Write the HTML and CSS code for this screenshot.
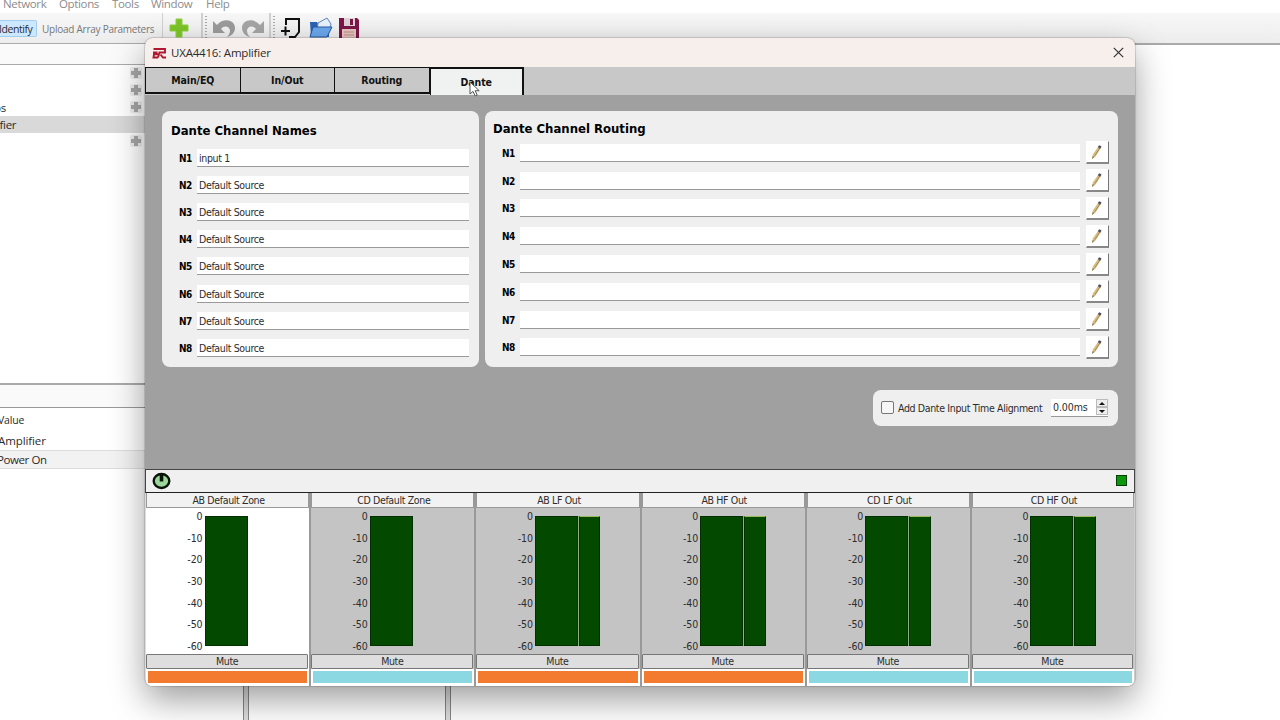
FILE: index.html
```html
<!DOCTYPE html>
<html lang="en">
<head>
    <meta charset="UTF-8">
    <meta name="viewport" content="width=device-width, initial-scale=1.0">
    <title>UXA4416: Amplifier</title>
    <link rel="stylesheet" href="styles.css">
</head>
<body>
    <div class="app">
        <nav class="menubar">
            <span class="m-network">Network</span>
            <span class="m-options">Options</span>
            <span class="m-tools">Tools</span>
            <span class="m-window">Window</span>
            <span>Help</span>
        </nav>
        <div class="toolbar">
            <button class="identify">Identify</button>
            <span class="upload">Upload Array Parameters</span>
            <i class="sep"></i>
            <svg class="ic-add" width="22" height="22" viewBox="0 0 22 22">
                <path d="M8 2h6v6h6v6h-6v6H8v-6H2V8h6z" fill="#7cc427" stroke="#8fd13c"/>
            </svg>
            <i class="sep wide"></i>
            <i class="grip"></i>
            <svg class="ic-undo" width="24" height="22" viewBox="0 0 24 22">
                <path d="M1 4v12h12l-4-4c3-4 9-3 9 2 0 2-1 4-3 6 5-1 8-5 8-9C23 3 12 0 5 8z" fill="#9b9b9b"/>
            </svg>
            <svg class="ic-redo" width="24" height="22" viewBox="0 0 24 22">
                <path d="M23 4v12H11l4-4c-3-4-9-3-9 2 0 2 1 4 3 6-5-1-8-5-8-9C1 3 12 0 19 8z" fill="#a5a5a5"/>
            </svg>
            <i class="sep wide"></i>
            <i class="grip"></i>
            <svg class="ic-new" width="20" height="22" viewBox="0 0 20 22">
                <path d="M5 8V2h13v13l-4 5H8M0 14h9M4.500 9.500v9" fill="none" stroke="#111" stroke-width="2"/>
            </svg>
            <svg class="ic-open" width="24" height="22" viewBox="0 0 24 22">
                <path d="M1 5h7l2 3h10v12H2z" fill="#2c62b4"/>
                <path d="M9 6l9-5 4 6-2 7H8z" fill="#e9f1fa" stroke="#5c87be"/>
                <path d="M4 10h19l-5 10H1z" fill="#6aa7ea" stroke="#2458a8"/>
            </svg>
            <svg class="ic-save" width="20" height="20" viewBox="0 0 20 20">
                <path d="M0 0h18l2 2v18H0z" fill="#7c1647"/>
                <path d="M5 0h11v8H5z" fill="#ded3d8"/>
                <path d="M11 1h3v6h-3z" fill="#7c1647"/>
                <path d="M3 11h14v9H3z" fill="#e6c4bd"/>
                <path d="M5 14h10M5 17h10" stroke="#bb8d8d"/>
            </svg>
        </div>
        <div class="workspace">
            <aside class="sidebar">
                <div class="side-head"></div>
                <ul class="tree">
                    <li><b class="plus"></b></li>
                    <li><b class="plus"></b></li>
                    <li>ps<b class="plus"></b></li>
                    <li class="selected">ifier</li>
                    <li><b class="plus"></b></li>
                </ul>
                <div class="props-head"></div>
                <div class="props">
                    <div class="prop-title">Value</div>
                    <div class="prop">Amplifier</div>
                    <div class="prop shaded">Power On</div>
                </div>
            </aside>
            <div class="splitter"></div>
            <div class="middle"></div>
            <div class="splitter"></div>
            <main class="canvas"></main>
        </div>
    </div>

    <div class="window">
        <header class="titlebar">
            <svg width="15" height="12" viewBox="0 0 15 12">
                <path d="M1.500 2h11.500v3.500H6.500M5.500 5.500H1M6 7.200H2L1.500 10.500H6M6 10.500L7.500 5.500M8.500 7.500l2.500 3h3" fill="none" stroke="#b01831" stroke-width="1.900"/>
            </svg>
            <span class="title">UXA4416: Amplifier</span>
            <svg class="close" width="11" height="11" viewBox="0 0 11 11">
                <path d="M.8.800l9.400 9.400M10.200.800L.8 10.200" stroke="#333" stroke-width="1.200"/>
            </svg>
        </header>
        <div class="tabs">
            <div class="tab">Main/EQ</div>
            <div class="tab">In/Out</div>
            <div class="tab">Routing</div>
            <div class="tab active">Dante</div>
        </div>
        <div class="content">
            <div class="panels">
                <section class="panel names">
                    <h2>Dante Channel Names</h2>
                    <div class="rows" id="names"></div>
                </section>
                <section class="panel routing">
                    <h2>Dante Channel Routing</h2>
                    <div class="rows" id="routing"></div>
                </section>
            </div>
            <div class="panel align">
                <i class="check"></i>
                <span class="align-label">Add Dante Input Time Alignment</span>
                <div class="spin">
                    <span>0.00ms</span>
                    <div class="arrows"><i class="up"></i><i class="down"></i></div>
                </div>
            </div>
        </div>
        <div class="status">
            <svg width="19" height="18" viewBox="0 0 19 18">
                <ellipse cx="9.500" cy="9" rx="7.800" ry="7" fill="#9bd79b" stroke="#0a140a" stroke-width="2.400"/>
                <path d="M9.500 3v6.500" stroke="#0a140a" stroke-width="3.600"/>
            </svg>
            <i class="led"></i>
        </div>
        <div class="strips" id="strips"></div>
    </div>

    <svg class="cursor" width="12" height="17" viewBox="0 0 12 17">
        <path d="M1 1v12l3-2.600L6.200 15l2-.9-2-4.400h4z" fill="#fff" stroke="#555"/>
    </svg>

    <script>
        const names = ['input 1', 'Default Source', 'Default Source', 'Default Source',
            'Default Source', 'Default Source', 'Default Source', 'Default Source'];

        const pencil = `<svg width="12" height="16" viewBox="0 0 12 16">
            <path d="M1 15l.8-4.500L7 3l2.500 1.500-5 8z" fill="#d8bb80"/>
            <path d="M4 11.500L8.800 4" stroke="#a58a4c"/>
            <path d="M6.800 3.300L8 1.200l2.500 1-1 2.600z" fill="#55505a"/>
            <path d="M1 15l.6-3 1.900 1z" fill="#8e8069"/>
        </svg>`;

        names.forEach((name, i) => {
            document.getElementById('names').innerHTML +=
                `<div class="row"><label>N${i + 1}</label><div class="field">${name}</div></div>`;
            document.getElementById('routing').innerHTML +=
                `<div class="row"><label>N${i + 1}</label><div class="field"></div><button class="edit">${pencil}</button></div>`;
        });

        const strips = [
            { name: 'AB Default Zone', color: 'orange', selected: true },
            { name: 'CD Default Zone', color: 'cyan' },
            { name: 'AB LF Out', color: 'orange', double: true },
            { name: 'AB HF Out', color: 'orange', double: true },
            { name: 'CD LF Out', color: 'cyan', double: true },
            { name: 'CD HF Out', color: 'cyan', double: true }
        ];
        const scale = [0, -10, -20, -30, -40, -50, -60];

        strips.forEach(strip => {
            document.getElementById('strips').innerHTML += `
                <div class="strip ${strip.selected ? 'selected' : ''}">
                    <div class="strip-name">${strip.name}</div>
                    <div class="meter">
                        <div class="scale">${scale.map(n => `<span>${n}</span>`).join('')}</div>
                        <div class="bar"></div>
                        ${strip.double ? '<div class="bar thin"></div>' : ''}
                    </div>
                    <button class="mute">Mute</button>
                    <div class="tag"><i class="${strip.color}"></i></div>
                </div>`;
        });
    </script>
</body>
</html>
```
FILE: styles.css
```css
* {
    box-sizing: border-box;
}

body {
    margin: 0;
    width: 1280px;
    height: 720px;
    overflow: hidden;
    position: relative;
    background: #fff;
    color: #2c2c2c;
    font-family: "DejaVu Sans Condensed", "DejaVu Sans", sans-serif;
    font-size: 10.5px;
    letter-spacing: -0.35px;
}

button {
    font: inherit;
    color: inherit;
    letter-spacing: inherit;
    padding: 0;
}

svg, i {
    display: block;
    flex: none;
}

/* main application */
.app {
    height: 720px;
    display: flex;
    flex-direction: column;
    font-family: "Open Sans", sans-serif;
}

.menubar {
    height: 13px;
    flex: none;
    display: flex;
    padding-left: 3px;
    line-height: 8px;
    font-size: 11.5px;
    color: #8c8c8c;
    white-space: nowrap;
}

.m-network { width: 56px; }
.m-options { width: 53px; }
.m-tools { width: 39px; }
.m-window { width: 55px; }

.toolbar {
    height: 30px;
    flex: none;
    display: flex;
    align-items: center;
    background: linear-gradient(#f7f7f7, #ededed);
    font-size: 10.5px;
    white-space: nowrap;
}

.identify {
    width: 37px;
    height: 17px;
    margin-top: 1px;
    border: 1px solid #a3cdec;
    border-left: 0;
    border-radius: 0 2px 2px 0;
    background: #cce8ff;
    text-align: left;
    text-indent: -1px;
    line-height: 14px;
    letter-spacing: -0.45px;
}

.upload {
    width: 120px;
    margin: 2px 0 0 5px;
    color: #777;
    font-size: 10px;
    letter-spacing: -0.25px;
}

.sep {
    width: 1px;
    height: 30px;
    background: #d0d0d0;
}

.sep.wide {
    width: 2px;
}

.grip {
    width: 2px;
    height: 24px;
    margin-left: 2px;
    background: repeating-linear-gradient(#aaa 0 1px, transparent 1px 3px);
}

.ic-add { margin: 0 11px 0 5px; }
.ic-undo { margin-left: 5px; }
.ic-redo { margin: 0 4px 0 5px; }
.ic-new { margin-left: 6px; }
.ic-open { margin-left: 8px; }
.ic-save { margin-left: 6px; }

.workspace {
    flex: 1;
    display: flex;
}

.sidebar {
    width: 243px;
    display: flex;
    flex-direction: column;
}

.side-head {
    height: 22px;
    border-top: 1px solid #aaa;
    border-bottom: 1px solid #aaa;
    background: #fafafa;
}

.tree {
    list-style: none;
    margin: 0;
    padding: 0;
    height: 318px;
    font-size: 11.5px;
}

.tree li {
    height: 17px;
    display: flex;
    align-items: center;
    position: relative;
    text-indent: -6px;
}

.tree li.selected {
    background: #d9d9d9;
    text-indent: -3px;
}

.plus {
    position: absolute;
    left: 130px;
    top: 2px;
    width: 12px;
    height: 12px;
    border-radius: 2px;
    background:
        linear-gradient(#a8a8a8, #a8a8a8) 50% 50% / 10px 4px no-repeat,
        linear-gradient(#a8a8a8, #a8a8a8) 50% 50% / 4px 10px no-repeat,
        #eee;
}

.props-head {
    height: 25px;
    border-top: 2px solid #aaa;
    border-bottom: 1px solid #999;
    background: #fafafa;
}

.prop-title {
    height: 24px;
    line-height: 25px;
    font-size: 10.5px;
    text-indent: -2px;
    letter-spacing: -0.2px;
}

.prop {
    height: 18px;
    line-height: 18px;
    font-size: 11.5px;
    text-indent: -2px;
    letter-spacing: -0.1px;
}

.prop.shaded {
    height: 19px;
    line-height: 17px;
    background: #f2f2f2;
    border-top: 1px solid #ddd;
    border-bottom: 1px solid #ddd;
    text-indent: -3px;
    letter-spacing: -0.4px;
}

.splitter {
    width: 6px;
    border-left: 1px solid #888;
    border-right: 1px solid #888;
    background: #ddd;
}

.middle {
    width: 196px;
}

.canvas {
    flex: 1;
    border-top: 2px solid #aaa;
}

/* amplifier window, floats over the application */
.window {
    position: absolute;
    left: 145px;
    top: 38px;
    width: 990px;
    height: 648px;
    display: flex;
    flex-direction: column;
    border-radius: 8px;
    overflow: hidden;
    background: #a0a0a0;
    box-shadow: 0 0 1px 1px rgba(0, 0, 0, 0.15), 0 14px 34px rgba(0, 0, 0, 0.38);
}

.titlebar {
    height: 29px;
    flex: none;
    display: flex;
    align-items: center;
    padding: 0 11px 0 7px;
    background: #f7efeb;
    font-family: "Open Sans", sans-serif;
}

.title {
    margin-left: 4px;
    padding-bottom: 1px;
    font-size: 11.5px;
    letter-spacing: -0.2px;
}

.close {
    margin-left: auto;
}

.tabs {
    height: 28px;
    flex: none;
    display: flex;
    background: #c8c8c8;
}

.tab {
    width: 94.500px;
    height: 27px;
    border: 1px solid #111;
    border-left-width: 0;
    border-bottom-width: 2px;
    text-align: center;
    line-height: 25px;
    font-size: 10.5px;
    font-weight: bold;
    letter-spacing: -0.1px;
    color: #111;
}

.tab:first-child {
    width: 95.500px;
    border-left-width: 1px;
}

.tab.active {
    height: 28px;
    border-width: 2px 2px 0 1px;
    background: #f0f2f2;
    line-height: 27px;
}

.content {
    height: 374px;
    flex: none;
    padding: 16px 17px 0;
}

.panels {
    display: flex;
    gap: 6px;
}

.panel {
    border-radius: 8px;
    background: #efefef;
}

.panel h2 {
    margin: 0;
    padding-left: 8px;
    font-size: 13px;
    line-height: 18px;
    letter-spacing: 0;
    color: #000;
}

.names {
    width: 317px;
    height: 256px;
    padding-top: 11px;
}

.names h2 {
    padding-left: 9px;
}

.routing {
    width: 633px;
    height: 256px;
    padding-top: 9px;
}

.row {
    display: flex;
    align-items: center;
}

.row label {
    width: 18px;
    margin-left: 1px;
    padding-top: 1px;
    flex: none;
    font-size: 10px;
    font-weight: bold;
    letter-spacing: -0.6px;
    color: #000;
}

.field {
    height: 18px;
    padding-left: 2px;
    border-bottom: 1px solid #999;
    background: #fff;
    line-height: 18px;
}

.names .rows {
    padding: 4px 0 0 16px;
}

.names .row {
    height: 27.200px;
}

.names .field {
    width: 272px;
}

.routing .rows {
    padding: 1px 0 0 16px;
}

.routing .row {
    height: 27.800px;
}

.routing .field {
    width: 560px;
}

.edit {
    width: 23px;
    height: 23px;
    margin-left: 6px;
    padding-right: 1px;
    display: flex;
    align-items: center;
    justify-content: center;
    border: 1px solid #fff;
    border-right-color: #777;
    border-bottom: 2px solid #888;
    background: #fff;
}

.align {
    width: 245px;
    height: 36px;
    margin: 23px 0 0 auto;
    padding: 0 10px 1px 8px;
    display: flex;
    align-items: center;
}

.check {
    width: 13px;
    height: 13px;
    border: 1px solid #777;
    border-radius: 2px;
    background: #f6f6f6;
}

.align-label {
    width: 149px;
    margin-left: 4px;
    white-space: nowrap;
}

.spin {
    width: 57px;
    height: 18px;
    margin-left: auto;
    padding-left: 2px;
    display: flex;
    align-items: center;
    justify-content: space-between;
    border-bottom: 1px solid #999;
    background: #fff;
    letter-spacing: -0.1px;
}

.arrows {
    width: 12px;
    display: flex;
    flex-direction: column;
}

.arrows i {
    height: 8px;
    border: 1px solid #bbb;
    background: #eee;
    display: flex;
    align-items: center;
    justify-content: center;
}

.arrows i::before {
    content: "";
    border: 3px solid transparent;
    border-top-width: 0;
    border-bottom-color: #111;
}

.arrows .down::before {
    transform: rotate(180deg);
}

.status {
    height: 24px;
    flex: none;
    display: flex;
    align-items: center;
    justify-content: space-between;
    padding: 0 7px 1px 6px;
    border: 1px solid #444;
    border-bottom-color: #222;
    background: #f0f0f0;
}

.led {
    width: 11px;
    height: 11px;
    border: 1px solid #044004;
    background: #0c960c;
}

.strips {
    flex: 1;
    display: grid;
    grid-template-columns: repeat(5, 165.200px) 1fr;
    padding-left: 1px;
    background: #ddd;
}

.strip {
    display: flex;
    flex-direction: column;
    border-right: 2px solid #999;
    background: #c4c4c4;
}

.strip:last-child {
    border-right: 1px solid #ccc;
}

.strip.selected {
    background: #fff;
}

.strip-name {
    height: 15px;
    border: 1px solid #999;
    border-top: 0;
    background: #f2f2f2;
    text-align: center;
    text-indent: 2px;
    line-height: 15px;
}

.meter {
    height: 146px;
    display: flex;
    padding: 8px 0 0 32.500px;
}

.scale {
    width: 24px;
    height: 141px;
    margin: -5px 2px 0 0;
    display: flex;
    flex-direction: column;
    justify-content: space-between;
    text-align: right;
    line-height: 11px;
    letter-spacing: -0.1px;
}

.bar {
    width: 43px;
    height: 130px;
    border: 1px solid #023002;
    background: #034a00;
}

.bar.thin {
    width: 21.500px;
    margin-left: 1px;
    border-top-color: #9cba5c;
    box-shadow: -1px 0 #8fb08a;
}

.mute {
    height: 15px;
    margin: 0 1px 0 0;
    border: 1px solid #777;
    border-radius: 1px;
    background: #dedede;
    line-height: 13px;
}

.tag {
    flex: 1;
    padding: 2px 2px 3px 2px;
    background: #fff;
}

.tag i {
    height: 12px;
}

.orange { background: #f37b2f; }
.cyan { background: #8bd7e2; }

.cursor {
    position: absolute;
    left: 469px;
    top: 81px;
}
```
